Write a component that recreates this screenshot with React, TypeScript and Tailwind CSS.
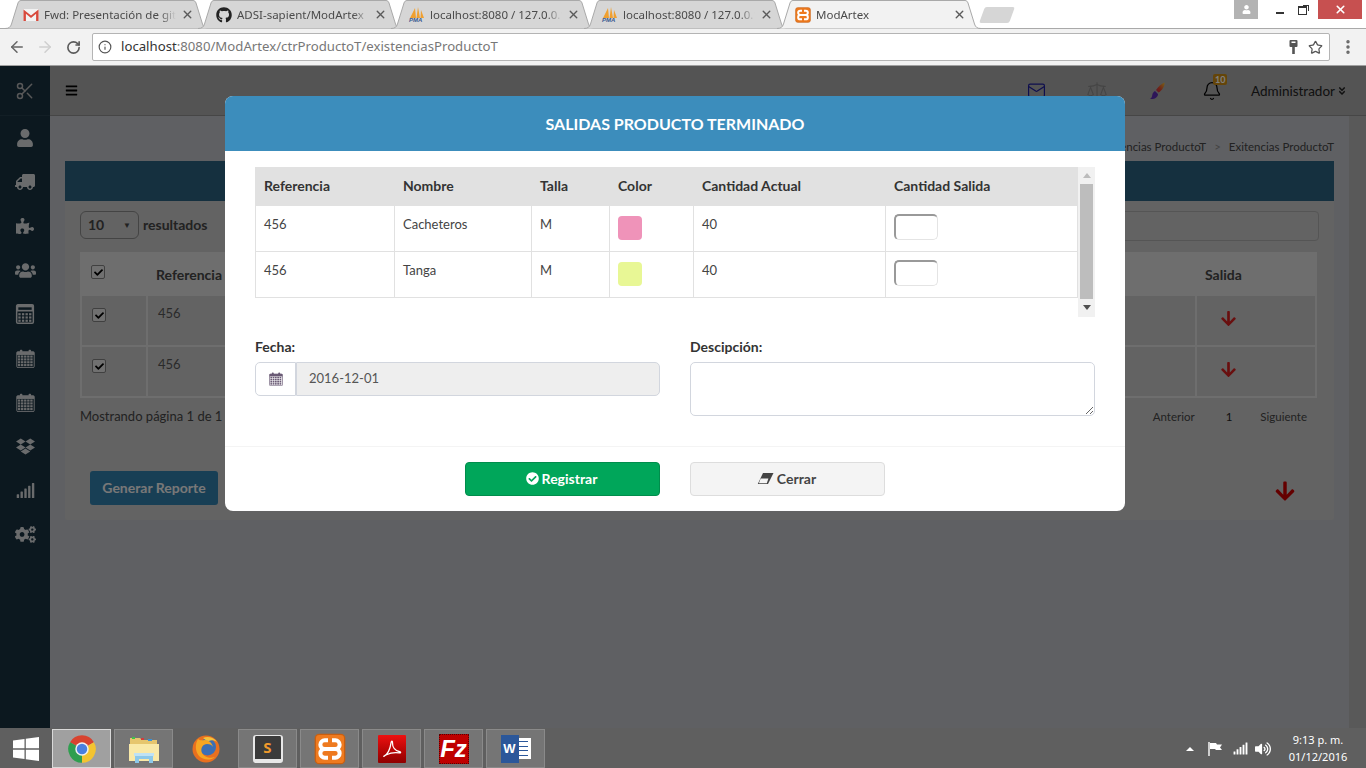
import {
  FaAngleDoubleDown,
  FaArrowDown,
  FaBars,
  FaCheck,
  FaCheckCircle,
  FaCogs,
  FaDropbox,
  FaGithub,
  FaPuzzlePiece,
  FaSignal,
  FaTruck,
  FaUser,
  FaUsers,
  FaVolumeUp,
} from "react-icons/fa";
import { ArrowLeft, ArrowRight, Bell, Info, Mail, MoreVertical, RotateCw, Scale, Scissors, Star, X } from "lucide-react";
import type { ReactNode } from "react";

const APP_FONT = "font-['Lato','Noto_Sans',sans-serif]";

function CalendarIcon({ size = 14 }: { size?: number }) {
  const cells = [];
  for (let r = 0; r < 4; r++) {
    for (let c = 0; c < 5; c++) {
      cells.push(<rect key={`${r}-${c}`} x={2.4 + c * 3.9} y={8.2 + r * 3.6} width={3} height={2.7} fill="currentColor" />);
    }
  }
  return (
    <svg width={size} height={size} viewBox="0 0 24 24" fill="currentColor">
      <rect x="1" y="3.5" width="22" height="4" />
      <rect x="5" y="1" width="3" height="6" rx="1" />
      <rect x="16" y="1" width="3" height="6" rx="1" />
      {cells}
      <rect x="1" y="3.5" width="22" height="20" rx="1.5" fill="none" stroke="currentColor" strokeWidth="1.2" />
    </svg>
  );
}

function CalculatorIcon({ size = 20 }: { size?: number }) {
  const cells = [];
  for (let r = 0; r < 3; r++) {
    for (let c = 0; c < 4; c++) {
      cells.push(<rect key={`${r}-${c}`} x={4 + c * 4.3} y={11 + r * 3.9} width={2.8} height={2.6} fill="currentColor" />);
    }
  }
  return (
    <svg width={size} height={size} viewBox="0 0 24 24">
      <rect x="2" y="1" width="20" height="22" rx="1.5" fill="none" stroke="currentColor" strokeWidth="1.8" />
      <rect x="2" y="1" width="20" height="8" fill="currentColor" />
      <rect x="4" y="4" width="16" height="3" fill="#18303f" />
      {cells}
    </svg>
  );
}

function XamppIcon({ size = 16 }: { size?: number }) {
  return (
    <svg width={size} height={size} viewBox="0 0 24 24">
      <rect x="1" y="1" width="22" height="22" rx="3" fill="#ee7a1f" stroke="#c95f10" />
      <path
        d="M10.5 5.500H8a3.200 3.200 0 0 0 0 6.500 3.200 3.200 0 0 0 0 6.500h2.500M13.500 5.500H16a3.200 3.200 0 0 1 0 6.500 3.200 3.200 0 0 1 0 6.500h-2.500M8 12h8"
        fill="none"
        stroke="#fff"
        strokeWidth="3"
      />
    </svg>
  );
}

function GmailIcon() {
  return (
    <svg width="16" height="14" viewBox="0 0 16 14">
      <rect x="0.5" y="1" width="15" height="12" fill="#f2f2f2" />
      <path d="M0.5 13V1.500L8 7.500l7.500-6V13h-2.400V5.800L8 10 2.900 5.800V13z" fill="#d8493c" />
    </svg>
  );
}

function PmaIcon() {
  return (
    <span className="relative block h-[16px] w-[16px]">
      <svg width="16" height="11" viewBox="0 0 16 11" className="absolute top-0 left-0">
        <path d="M1 11 6 1l1 10zM7.500 11 9 0l2 11zM11.500 11 12 3l3 8z" fill="#f0a030" />
      </svg>
      <span className="absolute bottom-[-1px] left-0 font-['Liberation_Sans',sans-serif] text-[6px] leading-[7px] font-bold text-[#3b5b92] italic">PMA</span>
    </span>
  );
}

function KeyIcon() {
  return (
    <svg width="9" height="16" viewBox="0 0 9 16" fill="#555">
      <rect x="0.5" y="1" width="8" height="7" rx="1" />
      <rect x="3.2" y="8" width="2.600" height="7" />
      <rect x="2.500" y="2.500" width="4" height="1.500" fill="#fff" />
    </svg>
  );
}

function BrushIcon() {
  return (
    <svg width="17" height="18" viewBox="0 0 17 18">
      <defs>
        <linearGradient id="brush-tip" x1="1" y1="0" x2="0" y2="1">
          <stop offset="0" stopColor="#f2c230" />
          <stop offset="0.6" stopColor="#e0452c" />
          <stop offset="1" stopColor="#c0285a" />
        </linearGradient>
      </defs>
      <path d="M15.500 0.500C16 4 13 8.500 9.500 10.500L7 8C9 5 12.500 1.500 15.500 0.500z" fill="url(#brush-tip)" />
      <path d="M6 9 9 12C9 15 6 17.500 1 17c2-1 2-3 2.500-5C4 10.500 5 9.500 6 9z" fill="#5b2bb0" />
    </svg>
  );
}

function EraserIcon() {
  return (
    <svg width="17" height="13" viewBox="0 0 17 13">
      <path d="M6 1h10.500L11 12H.800z" fill="#444" />
      <path d="M3.600 6.500h7.800L9.800 11.300H1.900z" fill="#f4f4f4" />
    </svg>
  );
}

const tabs: { title: string; icon: ReactNode; active?: boolean }[] = [
  { title: "Fwd: Presentación de git", icon: <GmailIcon /> },
  { title: "ADSI-sapient/ModArtex", icon: <FaGithub size={16} className="text-[#222]" /> },
  { title: "localhost:8080 / 127.0.0.1", icon: <PmaIcon /> },
  { title: "localhost:8080 / 127.0.0.1", icon: <PmaIcon /> },
  { title: "ModArtex", icon: <XamppIcon />, active: true },
];

function BrowserTab({ title, icon, active }: { title: string; icon: ReactNode; active?: boolean }) {
  return (
    <div className={`relative -ml-[11px] flex h-[29px] w-[204px] shrink-0 items-center pr-[15px] pl-[18px] first:ml-0 ${active ? "z-10" : ""}`}>
      <svg width="204" height="29" viewBox="0 0 204 29" className="absolute top-0 left-0">
        <path
          d="M0 28.500C4 28.500 5.500 27 6.500 24L13 3C13.500 1.500 14.500 .5 16 .5H188C189.500 .5 190.500 1.500 191 3L197.500 24C198.500 27 200 28.500 204 28.500"
          fill={active ? "#f2f2f2" : "#d6d6d6"}
          stroke="#a9a9a9"
        />
      </svg>
      <span className="relative flex w-[16px] shrink-0 justify-center">{icon}</span>
      <span className="relative ml-[5px] w-[132px] text-[11.5px] whitespace-nowrap text-[#4a4a4a] [mask-image:linear-gradient(to_right,black_88%,transparent)]">
        {title}
      </span>
      <X size={13} strokeWidth={2.6} className="relative ml-auto text-[#5a5a5a]" />
    </div>
  );
}

function BrowserChrome() {
  return (
    <div className="shrink-0 font-['Noto_Sans',sans-serif]">
      <div className="relative flex h-[29px] border-b border-[#a9a9a9] bg-white pl-[5px]">
        {tabs.map((t, i) => (
          <BrowserTab key={i} {...t} />
        ))}
        <div className="mt-[7px] ml-[1px] h-[16px] w-[30px] -skew-x-[20deg] rounded-[2px] bg-[#d6d6d6]" />
        <div className="ml-auto flex h-[19px] items-start">
          <div className="flex h-[19px] w-[24px] items-center justify-center bg-[#b3b3b3]">
            <FaUser size={9} className="text-white" />
          </div>
          <div className="flex h-[19px] w-[60px] justify-center gap-[14px] pt-[5px] pl-[6px]">
            <span className="mt-[7px] block h-[2px] w-[8px] bg-[#333]" />
            <span className="relative mt-[1px] block h-[9px] w-[9px] border border-t-2 border-[#333] bg-white before:absolute before:-top-[3px] before:-right-[3px] before:h-[6px] before:w-[6px] before:border-t before:border-r before:border-[#333]" />
          </div>
          <div className="mr-[4px] flex h-[19px] w-[44px] items-center justify-center bg-[#c75050]">
            <X size={13} strokeWidth={3} className="text-white" />
          </div>
        </div>
      </div>
      <div className="flex h-[37px] items-center border-b border-[#a0a0a0] bg-[#f2f2f2]">
        <div className="flex w-[92px] items-center pl-[8px]">
          <ArrowLeft size={18} strokeWidth={2} className="text-[#666]" />
          <ArrowRight size={18} strokeWidth={2} className="ml-[10px] text-[#cfcfcf]" />
          <RotateCw size={15} strokeWidth={2.6} className="ml-[12px] text-[#5a5a5a]" />
        </div>
        <div className="flex h-[28px] w-[1238px] items-center rounded-[2px] border border-[#b4b4b4] bg-white pr-[6px] pl-[5px]">
          <Info size={14} className="text-[#555]" />
          <span className="ml-[9px] text-[13.2px] text-[#333]">
            localhost<span className="text-[#777]">:8080/ModArtex/ctrProductoT/existenciasProductoT</span>
          </span>
          <span className="ml-auto">
            <KeyIcon />
          </span>
          <Star size={15} className="ml-[10px] text-[#555]" />
        </div>
        <MoreVertical size={18} strokeWidth={2.6} className="ml-[9px] text-[#666]" />
      </div>
    </div>
  );
}

const sideIcons: ReactNode[] = [
  <FaUser size={18} />,
  <FaTruck size={20} className="-scale-x-100" />,
  <FaPuzzlePiece size={18} />,
  <FaUsers size={21} />,
  <CalculatorIcon size={20} />,
  <CalendarIcon size={19} />,
  <CalendarIcon size={19} />,
  <FaDropbox size={19} />,
  <FaSignal size={19} />,
  <FaCogs size={21} />,
];

function Sidebar() {
  return (
    <aside className="flex w-[50px] shrink-0 flex-col items-center bg-[#18303f] text-[#d4d6d8]">
      <div className="flex h-[50px] w-full items-center justify-center border-b border-[#243c4a]">
        <Scissors size={20} strokeWidth={1.8} className="text-[#b0b0b0]" />
      </div>
      <div className="flex flex-col items-center">
        {sideIcons.map((icon, i) => (
          <div key={i} className="flex h-[44.1px] w-[50px] items-center justify-center">
            {icon}
          </div>
        ))}
      </div>
    </aside>
  );
}

function TopBar() {
  return (
    <header className="flex h-[50px] shrink-0 items-center border-b border-[#8c8c8c] bg-[#a8a8a8] pr-[19px] pl-[15px]">
      <FaBars size={13} className="text-black" />
      <div className="ml-auto flex items-center">
        <Mail size={19} strokeWidth={1.5} className="-ml-[3px] text-[#1d1d9c]" />
        <Scale size={22} strokeWidth={1.2} className="ml-[40px] text-[#8a8a8a]" />
        <span className="ml-[41px]">
          <BrushIcon />
        </span>
        <span className="relative ml-[36px]">
          <Bell size={20} strokeWidth={1.5} className="text-black" />
          <span className="absolute -top-[7px] left-[11px] rounded-[2px] bg-[#c98a12] px-[2px] text-[9px] leading-[11px] font-bold text-white">10</span>
        </span>
        <span className="mt-[1px] ml-[29px] text-[13.5px] text-[#222]">Administrador</span>
        <FaAngleDoubleDown size={10} className="ml-[2px] text-[#222]" />
      </div>
    </header>
  );
}

function Tick() {
  return (
    <span className="inline-flex h-[14px] w-[14px] items-center justify-center rounded-[2px] border border-[#808080] bg-[#e0e0e0]">
      <FaCheck size={9} className="text-black" />
    </span>
  );
}

function BackgroundCard() {
  const rows = [
    { ref: "456", name: "Cacheteros" },
    { ref: "456", name: "Tanga" },
  ];
  return (
    <div className="flex h-[359px] flex-col rounded-[2px] bg-[#c6c6c6] text-[#555]">
      <div className="h-[40px] shrink-0 bg-[#2a607e]" />
      <div className="flex flex-col px-[15px] pt-[10px]">
        <div className="flex h-[30px] items-start justify-between">
          <div className="flex items-center text-[14px] leading-[26px] font-bold">
            <div className="flex h-[28px] w-[59px] items-center justify-between rounded-[6px] border border-[#888] px-[7px] text-[#444]">
              10 <span className="text-[8px]">▼</span>
            </div>
            <span className="ml-[4px] text-[#444]">resultados</span>
          </div>
          <div className="h-[30px] w-[400px] rounded-[4px] border border-[#aaa]" />
        </div>
        <table className="mt-[11px] w-[1237px] table-fixed border-collapse border-2 border-[#dcdcdc] text-[13px]">
          <colgroup>
            <col className="w-[66px]" />
            <col />
            <col className="w-[120px]" />
          </colgroup>
          <thead>
            <tr className="h-[42px] bg-[#dcdcdc] text-left text-[14px] text-[#444]">
              <th className="pb-[6px] pl-[9px]">
                <Tick />
              </th>
              <th className="pl-[9px] font-bold">Referencia</th>
              <th className="pl-[9px] font-bold">Salida</th>
            </tr>
          </thead>
          <tbody>
            {rows.map((r) => (
              <tr key={r.name} className="h-[51px]">
                <td className="border-2 border-[#dcdcdc] pb-[10px] pl-[10px]">
                  <Tick />
                </td>
                <td className="border-2 border-[#dcdcdc] pb-[14px] pl-[10px] text-[#555]">{r.ref}</td>
                <td className="border-2 border-[#dcdcdc] pb-[4px] pl-[23px]">
                  <FaArrowDown size={17} className="text-[#d21f1f]" />
                </td>
              </tr>
            ))}
          </tbody>
        </table>
        <div className="mt-[9px] flex items-center justify-between text-[#444]">
          <span className="text-[13px]">Mostrando página 1 de 1</span>
          <div className="flex items-center pr-[12px] text-[11.5px]">
            <span>Anterior</span>
            <span className="ml-[31px] text-[#222]">1</span>
            <span className="ml-[28px]">Siguiente</span>
          </div>
        </div>
        <div className="mt-[44px] flex items-center justify-between pr-[23px] pl-[10px]">
          <button className="h-[34px] w-[128px] rounded-[3px] bg-[#307eaa] text-[14px] font-bold text-[#f0f0f0]">Generar Reporte</button>
          <FaArrowDown size={22} className="mt-[6px] text-[#c80000]" />
        </div>
      </div>
    </div>
  );
}

function ExitModal() {
  const rows = [
    { ref: "456", name: "Cacheteros", talla: "M", color: "bg-[#ef93b9]", qty: "40" },
    { ref: "456", name: "Tanga", talla: "M", color: "bg-[#e8f795]", qty: "40" },
  ];
  const th = "border-x border-[#e1e1e1] px-[8px] text-left font-bold";
  const td = "border border-[#e1e1e1] px-[8px] align-top pt-[9px]";
  return (
    <div className="absolute top-[30px] left-[225px] w-[900px] overflow-hidden rounded-[8px] bg-white text-[#444]">
      <div className="flex h-[55px] items-center justify-center bg-[#3c8dbc] text-[16px] font-bold text-white">SALIDAS PRODUCTO TERMINADO</div>
      <div className="h-[295px] px-[30px] pt-[16px]">
        <div className="flex h-[150px]">
          <table className="h-fit w-[823px] table-fixed border-collapse text-[13px]">
            <colgroup>
              <col className="w-[139px]" />
              <col className="w-[137px]" />
              <col className="w-[78px]" />
              <col className="w-[84px]" />
              <col className="w-[192px]" />
              <col />
            </colgroup>
            <thead>
              <tr className="h-[38px] bg-[#e1e1e1] text-[14px] text-[#333]">
                <th className={th}>Referencia</th>
                <th className={th}>Nombre</th>
                <th className={th}>Talla</th>
                <th className={th}>Color</th>
                <th className={th}>Cantidad Actual</th>
                <th className={th}>Cantidad Salida</th>
              </tr>
            </thead>
            <tbody>
              {rows.map((r) => (
                <tr key={r.name} className="h-[46px]">
                  <td className={td}>{r.ref}</td>
                  <td className={td}>{r.name}</td>
                  <td className={td}>{r.talla}</td>
                  <td className={`${td} !pt-[10px]`}>
                    <span className={`block h-[24px] w-[24px] rounded-[4px] ${r.color}`} />
                  </td>
                  <td className={td}>{r.qty}</td>
                  <td className={`${td} !pt-[8px]`}>
                    <input className="block h-[26px] w-[44px] rounded-[5px] border border-[#e4e4e4] border-t-2 border-l-2 border-t-[#999] border-l-[#999] outline-none" />
                  </td>
                </tr>
              ))}
            </tbody>
          </table>
          <div className="flex w-[17px] flex-col items-center bg-[#f1f1f1]">
            <span className="mt-[6px] h-0 w-0 border-x-[4px] border-b-[5px] border-x-transparent border-b-[#bcbcbc]" />
            <span className="mt-[6px] h-[115px] w-[13px] bg-[#bdbdbd]" />
            <span className="mt-[6px] h-0 w-0 border-x-[4px] border-t-[5px] border-x-transparent border-t-[#505050]" />
          </div>
        </div>
        <div className="mt-[21px] flex justify-between text-[14px]">
          <div className="w-[405px]">
            <label className="block h-[24px] leading-[18px] font-bold text-[#333]">Fecha:</label>
            <div className="flex h-[34px]">
              <span className="flex w-[41px] items-center justify-center rounded-l-[5px] border border-[#d2d6de] bg-white text-[#6a5a75]">
                <CalendarIcon size={14} />
              </span>
              <input
                disabled
                value="2016-12-01"
                className="min-w-0 flex-1 rounded-r-[5px] border border-[#d2d6de] bg-[#eeeeee] px-[12px] text-[13px] text-[#555]"
              />
            </div>
          </div>
          <div className="w-[405px]">
            <label className="block h-[24px] leading-[18px] font-bold text-[#333]">Descipción:</label>
            <textarea className="block h-[54px] w-full rounded-[5px] border border-[#d2d6de] outline-none" />
          </div>
        </div>
      </div>
      <div className="flex h-[65px] justify-center gap-[30px] border-t border-[#f4f4f4] pt-[15px] text-[14px] font-bold">
        <button className="flex h-[34px] w-[195px] items-center justify-center gap-[3px] rounded-[4px] border border-[#008d4c] bg-[#00a65a] pr-[2px] pb-[1px] text-white">
          <FaCheckCircle size={13} /> Registrar
        </button>
        <button className="flex h-[34px] w-[195px] items-center justify-center gap-[3px] rounded-[4px] border border-[#dddddd] bg-[#f4f4f4] pr-[2px] pb-[1px] text-[#444]">
          <EraserIcon /> Cerrar
        </button>
      </div>
    </div>
  );
}

function ChromeLogo({ size = 30 }: { size?: number }) {
  return (
    <svg width={size} height={size} viewBox="0 0 24 24">
      <path d="M12 12 2.470 6.500A11 11 0 0 1 21.530 6.500z" fill="#d8432f" />
      <path d="M12 12 21.530 6.500A11 11 0 0 1 12 23z" fill="#f4c430" />
      <path d="M12 12 12 23A11 11 0 0 1 2.470 6.500z" fill="#2f9e4f" />
      <circle cx="12" cy="12" r="5.400" fill="#f0f0f0" />
      <circle cx="12" cy="12" r="4.200" fill="#4a7fe0" />
    </svg>
  );
}

function FolderLogo() {
  return (
    <svg width="32" height="32" viewBox="0 0 32 32">
      <path d="M2 5h10l2 2h15v20H2z" fill="#e6c66e" />
      <rect x="4" y="4" width="3" height="2" fill="#3fc14a" />
      <rect x="13" y="5" width="3" height="2" fill="#d23c3c" />
      <rect x="20" y="6" width="4" height="2" fill="#3a93d8" />
      <path d="M1 11h30v17H1z" fill="#f9e9a8" />
      <path d="M7 30v-8h18v8h-4v-4H11v4z" fill="#8cc8ea" />
      <rect x="6" y="20" width="20" height="3" fill="#bfe2f5" />
    </svg>
  );
}

function FirefoxLogo() {
  return (
    <svg width="30" height="30" viewBox="0 0 30 30">
      <circle cx="15" cy="15" r="13.500" fill="#e8701f" />
      <circle cx="16.500" cy="13" r="8.500" fill="#3b6fb5" />
      <path d="M7 5c-3 5-3 12 1 17 4 4 11 5 16 1-5 2-11 0-13-4-2-5 1-9 5-9 3 0 5 1 6 3-1-4-4-7-8-7-3 0-5 1-7-1z" fill="#f6a623" />
      <path d="M12 4c4-2 11-1 14 4-3-2-6-2-8-1-2 0-4-1-6-3z" fill="#f6c23c" />
    </svg>
  );
}

function SublimeLogo() {
  return (
    <span className="flex h-[28px] w-[30px] items-center justify-center rounded-[3px] border-x-2 border-t border-b-[4px] border-[#e8e8e8] bg-[#3b3b3b] text-[15px] leading-none font-bold text-[#f09a2c]">
      S
    </span>
  );
}

function AcrobatLogo() {
  return (
    <span className="flex h-[28px] w-[28px] items-center justify-center rounded-[1px] bg-gradient-to-b from-[#ee1111] to-[#8f0000]">
      <svg width="22" height="22" viewBox="0 0 24 24" fill="none" stroke="#fff" strokeWidth="1.400">
        <path d="M3 20c4-2 7-8 8-15 .3-2 1.600-2 1.500 0-.2 5 3 9 8 10 1.500.3 1 1.500-.5 1.300-5-.6-10 0-14 2-2 1-3 2-3 1.700z" />
      </svg>
    </span>
  );
}

function FileZillaLogo() {
  return (
    <span className="flex h-[30px] w-[30px] items-center justify-center border border-dotted border-[#5a0000] bg-[#bf0000] font-['Liberation_Sans',sans-serif] text-[24px] leading-none font-bold text-white italic">
      Fz
    </span>
  );
}

function WordLogo() {
  return (
    <span className="relative flex h-[28px] w-[30px] items-center">
      <span className="absolute right-0 flex h-[21px] w-[18px] flex-col justify-evenly bg-white px-[3px]">
        <span className="h-px bg-[#2b579a]" />
        <span className="h-px bg-[#2b579a]" />
        <span className="h-px bg-[#2b579a]" />
        <span className="h-px bg-[#2b579a]" />
      </span>
      <span className="absolute left-0 flex h-[28px] w-[18px] items-center justify-center bg-[#2b579a] font-['Liberation_Sans',sans-serif] text-[13px] font-bold text-white">W</span>
    </span>
  );
}

function TaskButton({ children, selected, plain }: { children: ReactNode; selected?: boolean; plain?: boolean }) {
  const look = selected
    ? "border-[#d8d8d8] bg-[#a0a0a0]"
    : plain
      ? "border-transparent"
      : "border-[#8a8a8a] bg-[#757575]";
  return <div className={`flex h-[39px] w-[59px] shrink-0 items-center justify-center border ${look}`}>{children}</div>;
}

function Taskbar() {
  return (
    <footer className="flex h-[40px] shrink-0 items-end bg-[#5f5f5f] font-['Noto_Sans',sans-serif] text-white">
      <div className="flex h-[39px] w-[52px] items-center justify-center">
        <svg width="26" height="26" viewBox="0 0 26 26" fill="#fff">
          <path d="M0 4.500 11.500 3v9.300H0zM12.800 2.800 26 1v11.300H12.800zM0 13.700h11.500V23L0 21.500zM12.800 13.700H26V25l-13.200-1.800z" />
        </svg>
      </div>
      <div className="flex gap-[3px]">
        <TaskButton selected>
          <ChromeLogo />
        </TaskButton>
        <TaskButton>
          <FolderLogo />
        </TaskButton>
        <TaskButton plain>
          <FirefoxLogo />
        </TaskButton>
        <TaskButton>
          <SublimeLogo />
        </TaskButton>
        <TaskButton>
          <XamppIcon size={32} />
        </TaskButton>
        <TaskButton>
          <AcrobatLogo />
        </TaskButton>
        <TaskButton>
          <FileZillaLogo />
        </TaskButton>
        <TaskButton>
          <WordLogo />
        </TaskButton>
      </div>
      <div className="ml-auto flex h-[39px] items-center pr-[13px]">
        <span className="h-0 w-0 border-x-[4px] border-b-[4px] border-x-transparent border-b-white" />
        <svg width="16" height="16" viewBox="0 0 16 16" className="ml-[13px]">
          <path d="M2 1v14" stroke="#fff" strokeWidth="1.400" />
          <path d="M3 2h6l1 1.500h5l-2 3 2 2.500H9L8 8H3z" fill="#fff" />
        </svg>
        <FaSignal size={15} className="ml-[10px]" />
        <FaVolumeUp size={16} className="ml-[7px]" />
        <div className="ml-[12px] w-[70px] pb-[2px] text-center text-[11px] leading-[17px]">
          <div>9:13 p. m.</div>
          <div>01/12/2016</div>
        </div>
      </div>
    </footer>
  );
}

export default function App() {
  return (
    <div className="flex h-[768px] w-[1366px] flex-col overflow-hidden bg-white">
      <BrowserChrome />
      <div className={`relative flex min-h-0 flex-1 ${APP_FONT}`}>
        <Sidebar />
        <div className="flex min-w-0 flex-1 flex-col bg-[#bec0c6]">
          <TopBar />
          <div className="flex flex-1">
            <main className="flex min-w-0 flex-1 flex-col px-[15px]">
              <div className="flex h-[45px] items-end justify-end gap-[8px] pb-[6px] text-[11.5px] text-[#444]">
                <span>Existencias ProductoT</span>
                <span className="text-[#888]">&gt;</span>
                <span>Exitencias ProductoT</span>
              </div>
              <BackgroundCard />
            </main>
            <div className="w-[17px] shrink-0 bg-[#b2b2b2]" />
          </div>
        </div>
        <div className="absolute inset-0 bg-black/50" />
        <ExitModal />
      </div>
      <Taskbar />
    </div>
  );
}
